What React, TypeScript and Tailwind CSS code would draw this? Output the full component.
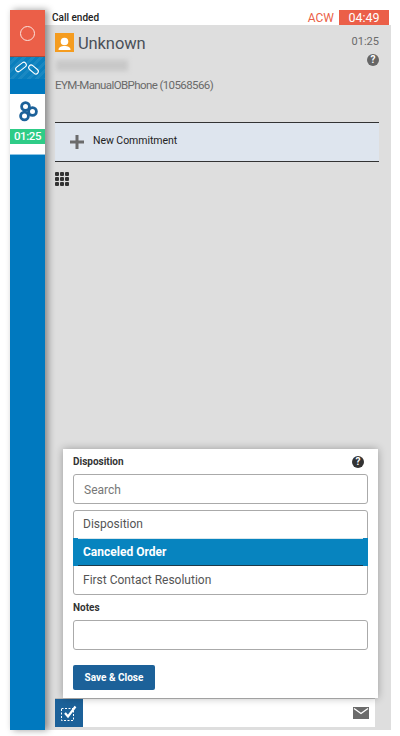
// App.tsx
export default function App() {
  return (
    <div className="w-[400px] h-[736px] bg-white pl-[10px] pr-[9px] pt-[10px] pb-[6px] flex font-['Roboto',sans-serif] overflow-hidden">
      {/* sidebar */}
      <div className="w-[35px] flex flex-col bg-[#0079bf] relative z-10 shadow-[3px_0_7px_rgba(0,0,0,0.4)]">
        <div className="h-[46px] bg-[#eb5f48] border-b border-[#a84a3a] box-content flex items-center justify-center">
          <div className="w-[15px] h-[15px] rounded-full border border-[#fbe3de]" />
        </div>
        <div className="h-[22px] bg-[repeating-linear-gradient(135deg,#0a7fbd_0px,#0a7fbd_3px,#1a88c2_3px,#1a88c2_6px)] flex items-center justify-center overflow-hidden">
          <svg width="26" height="16" viewBox="0 0 26 16" fill="none" stroke="#fff" strokeWidth="1.1">
            <rect x="0" y="4.5" width="12" height="5" rx="2.5" transform="rotate(-38 6 7)" />
            <rect x="13" y="7" width="11" height="5" rx="2.5" transform="rotate(40 18.5 9.5)" />
          </svg>
        </div>
        <div className="h-[15px]" />
        <div className="h-[60px] bg-white flex flex-col">
          <div className="h-[35px] flex items-center justify-center">
            <svg width="20" height="21" viewBox="0 0 20 21" fill="none" stroke="#1c6199" strokeWidth="2.8">
              <circle cx="7.5" cy="5.5" r="3.9" />
              <circle cx="14.5" cy="10.5" r="3.9" />
              <circle cx="6.5" cy="15" r="3.9" />
            </svg>
          </div>
          <div className="h-[15px] bg-[#2ecc87] text-white text-[11.5px] font-medium leading-[15px] text-center tracking-[-0.4px]">01:25</div>
        </div>
        <div className="h-px bg-[#8cc4e4]" />
      </div>

      {/* main */}
      <div className="w-[346px] flex flex-col">
        <div className="h-[15px] bg-white flex items-center shrink-0">
          <span className="pl-[7px] text-[10px] font-medium text-[#222] flex-1">Call ended</span>
          <span className="text-[12px] text-[#eb5f48] mr-[5px]">ACW</span>
          <span className="w-[50px] h-[15px] bg-[#eb5f48] text-white text-[12.5px] leading-[15px] text-center mr-[2px]">04:49</span>
        </div>

        <div className="flex-1 bg-[#dedede] pl-[10px] pr-[12px] flex flex-col">
          {/* contact header */}
          <div className="flex pt-[8px] h-[97px] shrink-0">
            <div className="flex-1">
              <div className="flex items-center h-[19px]">
                <div className="w-[19px] h-[19px] bg-[#f59c1f] flex items-end justify-center overflow-hidden">
                  <svg width="15" height="16" viewBox="0 0 15 16" fill="#fff">
                    <circle cx="7.5" cy="5.5" r="3.8" />
                    <path d="M1.5 14c0-3 2.5-4 6-4s6 1 6 4z" />
                  </svg>
                </div>
                <span className="ml-[4px] text-[16.5px] leading-[21px] mt-[2px] text-[#4a5058] tracking-[-0.1px]">Unknown</span>
              </div>
              <div className="w-[72px] h-[11px] mt-[8px] ml-px bg-[#c8c8c8] blur-[2px]" />
              <div className="mt-[7px] text-[11.5px] leading-[14px] text-[#6a6a6a] tracking-[-0.6px]">EYM-ManualOBPhone (10568566)</div>
            </div>
            <div className="flex flex-col items-end">
              <span className="text-[11px] leading-[14px] text-[#6a6a6a] mt-[2px]">01:25</span>
              <div className="mt-[5px] w-[12px] h-[12px] rounded-full bg-[#666] text-white text-[10px] font-bold leading-[12px] text-center">?</div>
            </div>
          </div>

          <div className="h-[40px] shrink-0 bg-[#dee5ee] border-y border-[#333] flex items-center pl-[15px]">
            <svg width="14" height="14" viewBox="0 0 14 14" fill="#6b6b6b">
              <rect x="5.5" y="0" width="3" height="14" />
              <rect x="0" y="5.5" width="14" height="3" />
            </svg>
            <span className="ml-[9px] text-[10.5px] text-[#222] -mt-[2px] tracking-[-0.05px]">New Commitment</span>
          </div>

          <div className="mt-[10px] grid grid-cols-3 gap-px w-[14px] h-[14px] shrink-0">
            {Array.from({ length: 9 }).map((_, i) => (
              <div key={i} className="bg-[#333] rounded-[1px]" />
            ))}
          </div>

          {/* disposition card */}
          <div className="mt-auto ml-[8px] mr-[1px] h-[249px] bg-white shadow-[0_0_8px_rgba(0,0,0,0.3)] px-[10px] pt-[5px] relative z-[1]">
            <div className="flex items-center justify-between h-[14px] pr-[4px]">
              <span className="text-[10px] font-bold text-[#333]">Disposition</span>
              <div className="w-[12px] h-[12px] rounded-full bg-[#333] text-white text-[10px] font-bold leading-[12px] text-center mt-px">?</div>
            </div>
            <div className="mt-[6px] h-[30px] border border-[#aaa] rounded-[3px] pl-[10px] text-[12px] leading-[30px] text-[#777]">Search</div>
            <div className="mt-[6px] h-[85px] border border-[#aaa] rounded-[3px] text-[12px] text-[#555]">
              <div className="h-[27px] pl-[9px] leading-[27px]">Disposition</div>
              <div className="relative h-[28px] bg-[#0784bf] text-white font-bold leading-[28px] -ml-px w-[295px] pl-[10px]">
                Canceled Order
                <div className="absolute top-0 left-[5px] right-[5px] h-px bg-[#d8e6ec]" />
                <div className="absolute bottom-0 left-[5px] right-[5px] h-px bg-[#1d3a4a]" />
              </div>
              <div className="h-[28px] pl-[9px] leading-[28px]">First Contact Resolution</div>
            </div>
            <div className="mt-[6px] text-[10px] font-bold text-[#333] leading-[14px]">Notes</div>
            <div className="mt-[5px] h-[30px] border border-[#aaa] rounded-[3px]" />
            <button className="mt-[15px] block w-[82px] h-[25px] bg-[#1c6199] rounded-[2px] text-white text-[10px] font-bold">Save &amp; Close</button>
          </div>

          {/* bottom toolbar */}
          <div className="h-[29px] shrink-0 mr-[4px] bg-white border-t border-[#bbb] flex items-center justify-between pr-[6px] relative">
            <div className="w-[28px] h-[28px] bg-[#1c6199] flex items-center justify-center">
              <svg width="18" height="18" viewBox="0 0 18 18" fill="none" stroke="#fff">
                <rect x="1.5" y="4.5" width="12" height="12" strokeDasharray="2 1.5" />
                <path d="M5 9l3 3.5 7.5-10" strokeWidth="2.2" />
              </svg>
            </div>
            <svg width="16" height="12" viewBox="0 0 16 12">
              <rect width="16" height="12" fill="#6b6b6b" />
              <path d="M1 1.5l7 5 7-5" fill="none" stroke="#fff" strokeWidth="1.4" />
            </svg>
          </div>
          <div className="h-[3px] shrink-0" />
        </div>
      </div>
    </div>
  )
}
